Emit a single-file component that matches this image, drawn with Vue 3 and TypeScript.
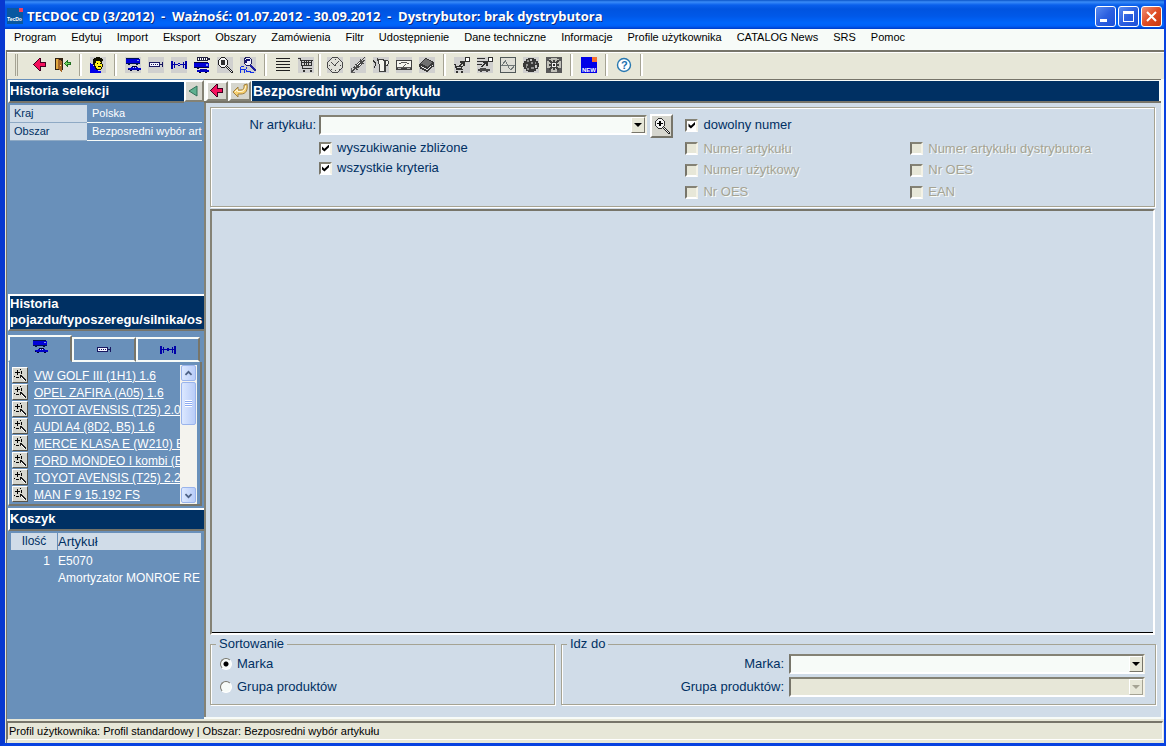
<script setup lang="ts">
import { ref } from 'vue'

interface Shape {
  d: string
  f?: string
  s?: string
  w?: number
}

const gray: Shape = { d: 'M0 0H16V16H0Z', f: '#d0d0cf' }
const truck: Shape[] = [
  { d: 'M1 1H14V2H15V6H1Z', f: '#0000d8' },
  { d: 'M1 1H14V2H1ZM1 6H15V7H1ZM3 7H5V8H3ZM11 7H13V8H11Z', f: '#001050' },
  { d: 'M12 3H14V4H12Z', f: '#8098e8' },
]
const car: Shape[] = [
  { d: 'M3 11H6V10H13V11H16V13H3Z', f: '#0000c8' },
  { d: 'M8 10H9V11H8ZM10 10H11V11H10Z', f: '#c8d4f0' },
  { d: 'M7 9H12V10H7ZM5 13H7V14H5ZM12 13H14V14H12ZM3 12H4V13H3Z', f: '#000030' },
]

const icons: Record<string, Shape[]> = {
  back: [
    { d: 'M1 7H2V6H3V5H4V4H5V3H6V2H7V1H9V5H14V10H9V14H7V13H6V12H5V11H4V10H3V9H2V8H1Z', f: '#400020' },
    { d: 'M2 7H3V6H4V5H5V4H6V3H7V2H8V6H13V9H8V13H7V12H6V11H5V10H4V9H3V8H2Z', f: '#f4105c' },
  ],
  door: [
    { d: 'M0 1H8V13H0Z', f: '#302010' },
    { d: 'M1 2H3V12H1Z', f: '#e0a840' },
    { d: 'M3 2H4V3H6V4H7V15H6V14H5V13H4V12H3Z', f: '#a86828' },
    { d: 'M5 8H6V9H5Z', f: '#fff080' },
    { d: 'M9 6H10V5H11V4H12V3H13V5H16V8H13V10H12V9H11V8H10V7H9Z', f: '#207020' },
    { d: 'M10 6H11V5H12V6H15V7H12V8H11V7H10Z', f: '#70d860' },
  ],
  head: [
    gray,
    { d: 'M0 6H1V7H3V9H5V12H8V14H11V16H0Z', f: '#0000e8' },
    { d: 'M4 3H11V4H12V7H13V10H12V12H11V13H6V12H5V10H4V8H3V4H4Z', f: '#181800' },
    { d: 'M5 4H10V5H11V7H12V10H11V12H7V11H6V9H5Z', f: '#fff020' },
    { d: 'M3 2H4V1H6V0H10V1H12V2H13V4H6V6H5V7H3Z', f: '#101000' },
    { d: 'M7 6H8V7H7ZM10 6H11V7H10ZM8 9H11V10H8Z', f: '#000' },
  ],
  vehicles: [gray, ...truck, ...car],
  engine: [
    gray,
    { d: 'M1 5H12V10H1Z', f: '#181860' },
    { d: 'M2 6H11V9H2Z', f: '#f4f4ff' },
    { d: 'M3 7H4V8H3ZM5 7H6V8H5ZM7 7H8V8H7ZM9 7H10V8H9ZM12 7H14V8H12ZM14 5H15V10H14Z', f: '#181860' },
  ],
  axle: [
    gray,
    { d: 'M0 4H2V12H0ZM3 5H4V11H3ZM12 5H13V11H12ZM14 4H16V12H14Z', f: '#0000a8' },
    { d: 'M2 7H14V8H2ZM7 6H9V9H7Z', f: '#0000a8' },
  ],
  truckengine: [
    { d: 'M3 0H14V4H3ZM14 1H16V3H14Z', f: '#202040' },
    { d: 'M4 1H5V3H4ZM6 1H7V3H6ZM8 1H9V3H8ZM10 1H11V3H10ZM12 1H13V3H12Z', f: '#fff' },
    { d: 'M0 5H14V6H15V10H0Z', f: '#0000d8' },
    { d: 'M0 10H15V11H0ZM0 5H14V6H0ZM3 11H5V12H3Z', f: '#000048' },
    { d: 'M12 7H14V9H12Z', f: '#8098e8' },
    { d: 'M3 13H6V12H13V13H15V15H3Z', f: '#0000c0' },
    { d: 'M5 15H7V16H5ZM11 15H13V16H11Z', f: '#000020' },
  ],
  zoom: [
    gray,
    { d: 'M4.5 .5H7.5L10.5 3.5V7.5L7.5 10.5H4.5L1.5 7.5V3.5Z', f: '#f4f4f4', s: '#202020', w: 1 },
    { d: 'M4 3H8V8H4Z', f: '#303030' },
    { d: 'M9 10H10V9H11V10H12V11H13V12H14V13H15V14H16V16H14V15H13V14H12V13H11V12H10V11H9Z', f: '#202020' },
    { d: 'M10 10H11V11H12V12H13V13H14V14H15V15H14V14H13V13H12V12H11V11H10Z', f: '#f0f0f0' },
  ],
  userzoom: [
    gray,
    { d: 'M5.5 .5H9.5L11.5 2.5V6.5L9.5 8.5H6.5L4.5 6.5V2.5Z', f: '#f0f0ff', s: '#202060', w: 1 },
    { d: 'M5 3H6V2H10V4H7V6H5Z', f: '#101070' },
    { d: 'M10 8H12V9H13V10H14V11H15V12H16V14H14V13H13V12H12V11H11V10H10Z', f: '#2020a0' },
    { d: 'M0 10H1V9H4V10H1V12H7V13H1V16H0ZM4 13H5V16H4ZM6 10H7V14H11V15H14V16H10V15H6Z', f: '#1030e8' },
  ],
  lines: [{ d: 'M1 1H15V2H1ZM1 4H15V5H1ZM1 7H15V8H1ZM1 10H15V11H1ZM1 13H15V14H1Z', f: '#202020' }],
  cart: [
    gray,
    { d: 'M0 1H3V3H15V4H14V9H5V11H14V12H4V9H3V4H2V2H0ZM4 4V5H13V4ZM4 6V8H13V6Z', f: '#303030' },
    { d: 'M6 4H7V9H6ZM8 4H9V9H8ZM10 4H11V9H10ZM5 13H7V15H5ZM12 13H14V15H12Z', f: '#303030' },
  ],
  clock: [
    gray,
    { d: 'M5.5 .5H10.5L15.5 5.5V10.5L10.5 15.5H5.5L.5 10.5V5.5Z', f: '#e0e0d8', s: '#484848', w: 1 },
    { d: 'M4 5H5V6H6V7H7V8H8V7H9V6H10V5H11V4H12V5H11V6H10V7H9V9H7V8H6V7H5V6H4ZM8 2H9V3H8ZM8 13H9V14H8ZM2 8H3V9H2ZM13 8H14V9H13ZM4 12H5V13H4ZM12 12H13V13H12Z', f: '#484848' },
  ],
  plug: [
    gray,
    { d: 'M14 0H15V1H14V2H13V3H12V4H13V3H15V4H14V5H13V6H14V7H12V8H11V9H10V10H9V11H7V12H8V13H6V12H5V13H4V14H3V15H1V14H2V13H3V12H4V11H3V10H4V9H5V10H6V8H5V7H7V6H8V5H9V4H10V2H11V3H12V2H13V1H14Z', f: '#484848' },
    { d: 'M9 5H10V6H9V7H8V8H7V7H8V6H9ZM10 7H11V8H10V9H9V8H10Z', f: '#fff' },
    { d: 'M1 11H2V14H1ZM1 15H5V16H1Z', f: '#606060' },
  ],
  jug: [
    gray,
    { d: 'M4 1H5V2H11V3H15V4H16V7H15V9H13V15H6V7H5V4H4Z', f: '#404040' },
    { d: 'M6 3H10V4H11V14H7V7H6ZM13 4H15V7H14V8H13Z', f: '#f4f4ee' },
    { d: 'M0 3H1V4H2V5H3V9H2V11H1V9H2V6H1V5H0Z', f: '#303030' },
  ],
  gauge: [
    gray,
    { d: 'M0 3H16V13H0Z', f: '#404040' },
    { d: 'M1 4H15V10H1Z', f: '#f4f4ee' },
    { d: 'M3 6H5V5H11V6H13V7H11V6H5V7H3ZM9 7H10V8H9V9H8V10H7V9H8V8H9ZM1 10H15V11H1Z', f: '#585858' },
    { d: 'M2 11H5V12H2ZM11 11H14V12H11Z', f: '#b0b0b0' },
  ],
  book: [
    gray,
    { d: 'M6 1H8V2H10V3H12V4H14V5H15V10H13V11H12V12H11V13H10V14H9V15H7V14H5V13H3V12H1V10H0V7H1V6H2V5H3V4H4V3H5V2H6Z', f: '#383838' },
    { d: 'M6 2H8V3H10V4H12V5H13V6H12V7H11V8H10V9H9V10H8V9H6V8H4V7H2V6H3V5H4V4H5V3H6Z', f: '#707070' },
    { d: 'M2 10H3V11H5V12H7V13H9V12H10V11H11V10H12V9H14V8H13V9H11V10H10V11H9V12H7V11H5V10H3V9H2Z', f: '#e8e8e8' },
  ],
  cartgo: [
    gray,
    { d: 'M11 0H16V5H11Z', f: '#303030' },
    { d: 'M12 1H15V4H12Z', f: '#fff' },
    { d: 'M6 4H11V9H9V7H8V8H7V9H5V8H6V7H7V6H6Z', f: '#303030' },
    { d: 'M0 7H2V9H9V10H8V12H9V13H2V11H1V8H0ZM3 10V11H7V10ZM2 14H4V16H2ZM7 14H9V16H7Z', f: '#303030' },
  ],
  listgo: [
    gray,
    { d: 'M0 1H8V2H0ZM0 4H6V5H0ZM0 7H5V8H0Z', f: '#303030' },
    { d: 'M11 0H16V5H11Z', f: '#303030' },
    { d: 'M12 1H15V4H12Z', f: '#fff' },
    { d: 'M6 4H11V9H9V7H8V8H7V9H6V10H4V9H5V8H6V7H7V6H6Z', f: '#303030' },
    { d: 'M1 12H3V11H9V12H13V14H11V15H9V14H5V15H3V14H1Z', f: '#484848' },
  ],
  wave: [
    { d: 'M.5 .5H15.5V15.5H.5Z', f: '#deded6', s: '#505858', w: 1 },
    { d: 'M1 8H15V9H1Z', f: '#707878' },
    { d: 'M2 7H3V5H4V4H5V3H6V5H7V7H8V9H9V11H10V12H11V11H12V10H13V9H14V11H13V12H12V13H10V12H9V11H8V9H7V7H6V5H5V6H4V7H3V8H2Z', f: '#707878' },
  ],
  globe: [
    gray,
    { d: 'M5 1H11V2H13V4H15V6H16V10H15V12H13V14H11V15H5V14H3V12H1V10H0V6H1V4H3V2H5Z', f: '#383838' },
    { d: 'M4 3H6V5H4ZM8 5H10V7H8ZM3 7H5V9H4V11H6V13H4V11H3ZM12 5H13V7H12ZM8 10H11V12H8Z', f: '#909090' },
    { d: 'M7 2H9V4H7ZM12 8H14V11H12Z', f: '#c8c8c8' },
  ],
  wheel: [
    { d: 'M0 0H16V16H0Z', f: '#585858' },
    { d: 'M5 1H11V2H13V4H15V11H13V13H11V15H5V13H3V11H1V4H3V2H5Z', f: '#c0c0b8' },
    { d: 'M3 3H5V4H6V5H7V3H9V5H10V4H11V3H13V5H12V6H11V7H13V9H11V10H12V11H13V13H11V12H10V11H9V13H7V11H6V12H5V13H3V11H4V10H5V9H3V7H5V6H4V5H3Z', f: '#404040' },
    { d: 'M6 6H10V10H6Z', f: '#f0f0f0' },
    { d: 'M7 7H9V9H7Z', f: '#303030' },
  ],
  undo: [
    { d: 'M1 9L6 4V7H9C11.5 7 12.5 5 12 2L15 1C16 7 14 11 9 11H6V14Z', f: '#f8d070', s: '#a08040', w: 1 },
    { d: 'M3 9L5.5 6.5V8.5H9C12 8.5 13.5 6 13.5 3', s: '#fff8d8', w: 1 },
  ],
  left: [{ d: 'M3 8L11 3V13Z', f: '#60b090', s: '#307058', w: 1 }],
  findplus: [
    { d: 'M4.5 .5H7.5L10.5 3.5V7.5L7.5 10.5H4.5L1.5 7.5V3.5Z', f: '#f4f4f4', s: '#303030', w: 1 },
    { d: 'M3 5H9V6H3ZM5 3H7V8H5Z', f: '#000' },
    { d: 'M9 10H10V9H11V10H12V11H13V12H14V13H15V14H16V16H14V15H13V14H12V13H11V12H10V11H9Z', f: '#202020' },
    { d: 'M10 10H11V11H12V12H13V13H14V14H15V15H14V14H13V13H12V12H11V11H10Z', f: '#f0f0f0' },
  ],
  rowzoom: [
    { d: 'M2 4H7V5H2ZM4 2H5V7H4ZM7 1H8V2H7ZM8 3H9V6H8ZM7 7H8V8H7ZM1 8H2V9H1ZM3 9H6V10H3Z', f: '#000' },
    { d: 'M7 8H8V7H9V8H10V9H11V10H12V11H13V13H12V12H11V11H10V10H9V9H8V10H7Z', f: '#202020' },
    { d: 'M8 9H9V10H10V11H11V12H12V13H11V12H10V11H9V10H8Z', f: '#fff' },
  ],
}

const menu = ['Program', 'Edytuj', 'Import', 'Eksport', 'Obszary', 'Zamówienia', 'Filtr', 'Udostępnienie',
  'Dane techniczne', 'Informacje', 'Profile użytkownika', 'CATALOG News', 'SRS', 'Pomoc']

const toolbar: string[][] = [
  ['back', 'door'],
  ['head'],
  ['vehicles', 'engine', 'axle', 'truckengine', 'zoom', 'userzoom'],
  ['lines', 'cart'],
  ['clock', 'plug', 'jug', 'gauge', 'book'],
  ['cartgo', 'listgo', 'wave', 'globe', 'wheel'],
  ['new'],
  ['help'],
]

const history = ['VW GOLF III (1H1) 1.6', 'OPEL ZAFIRA (A05) 1.6', 'TOYOT AVENSIS (T25) 2.0', 'AUDI A4 (8D2, B5) 1.6',
  'MERCE KLASA E (W210) E', 'FORD MONDEO I kombi (B', 'TOYOT AVENSIS (T25) 2.2', 'MAN F 9 15.192 FS']

const tabs = ['vehicles', 'engine', 'axle']
const activeTab = ref(0)

const numberKinds = ['Numer artykułu', 'Numer artykułu dystrybutora', 'Numer użytkowy', 'Nr OES', 'Nr OES', 'EAN']
const fuzzy = ref(true)
const allCriteria = ref(true)
const anyNumber = ref(true)
const sort = ref('marka')
</script>

<template>
  <div class="window">
    <header class="titlebar">
      <svg class="logo" viewBox="0 0 16 16" aria-hidden="true">
        <path d="M0 0H16V16H0Z" fill="#0a58a0" />
        <path d="M12 0H16V4H12Z" fill="#f04060" />
        <text x="0" y="13" font-size="5" font-weight="bold" fill="#fff">TecDo</text>
      </svg>
      <h1>TECDOC CD (3/2012)&nbsp; -&nbsp; Ważność: 01.07.2012 - 30.09.2012&nbsp; -&nbsp; Dystrybutor: brak dystrybutora</h1>
      <button class="cap" aria-label="Minimalizuj"><svg viewBox="0 0 19 19"><path d="M4 12H11V15H4Z" fill="#fff" /></svg></button>
      <button class="cap" aria-label="Maksymalizuj"><svg viewBox="0 0 19 19"><path d="M4 4H15V15H4ZM5 7V14H14V7Z" fill="#fff" fill-rule="evenodd" /></svg></button>
      <button class="cap close" aria-label="Zamknij"><svg viewBox="0 0 19 19"><path d="M5 5L14 14M14 5L5 14" stroke="#fff" stroke-width="2" /></svg></button>
    </header>

    <nav class="menu">
      <button v-for="m in menu" :key="m">{{ m }}</button>
    </nav>

    <div class="work">
      <div class="toolbar">
        <span class="grip"></span>
        <div v-for="(group, g) in toolbar" :key="g" class="group" :class="{ tight: g === 3 }">
          <button v-for="name in group" :key="name" :aria-label="name">
            <svg v-if="name === 'new'" viewBox="0 0 16 16">
              <path d="M0 0H16V16H0Z" fill="#0000e8" />
              <path d="M11 0H16V5H11Z" fill="#f87030" />
              <text x="1" y="15" font-size="6" font-weight="bold" fill="#fff">NEW</text>
            </svg>
            <svg v-else-if="name === 'help'" class="smooth" viewBox="0 0 16 16">
              <circle cx="8" cy="8" r="6.5" fill="#fff" stroke="#2878b0" stroke-width="1.4" />
              <text x="5" y="12" font-size="11" font-weight="bold" fill="#2070b0">?</text>
            </svg>
            <svg v-else viewBox="0 0 16 16">
              <path v-for="(p, i) in icons[name]" :key="i" :d="p.d" fill-rule="evenodd" :fill="p.f ?? 'none'" :stroke="p.s" :stroke-width="p.w" />
            </svg>
          </button>
        </div>
      </div>

      <div class="main">
        <aside class="side">
          <div class="side-top">
            <h2 class="bar">Historia selekcji</h2>
            <button class="sq" aria-label="Zwiń">
              <svg class="smooth" viewBox="0 0 16 16"><path v-for="(p, i) in icons.left" :key="i" :d="p.d" :fill="p.f ?? 'none'" :stroke="p.s" /></svg>
            </button>
          </div>
          <table class="sel">
            <tbody>
              <tr><th scope="row">Kraj</th><td>Polska</td></tr>
              <tr><th scope="row">Obszar</th><td>Bezposredni wybór art</td></tr>
            </tbody>
          </table>

          <h2 class="bar two">Historia<br>pojazdu/typoszeregu/silnika/os</h2>
          <div class="tabs" role="tablist">
            <button v-for="(t, i) in tabs" :key="t" role="tab" :class="{ on: activeTab === i }"
              :aria-selected="activeTab === i" :aria-label="t" @click="activeTab = i">
              <svg viewBox="0 0 16 16">
                <path v-for="(p, k) in icons[t].slice(1)" :key="k" :d="p.d" :fill="p.f ?? 'none'" :stroke="p.s" />
              </svg>
            </button>
          </div>
          <div class="pane">
            <ul class="list">
              <li v-for="h in history" :key="h">
                <button class="mini" aria-label="Szczegóły">
                  <svg viewBox="0 0 14 14">
                    <path v-for="(p, k) in icons.rowzoom" :key="k" :d="p.d" :fill="p.f ?? 'none'" />
                  </svg>
                </button>
                <a href="#">{{ h }}</a>
              </li>
            </ul>
            <div class="scroll">
              <button aria-label="W górę"><svg viewBox="0 0 15 15"><path d="M4 9L7.5 5.5L11 9" fill="none" stroke="#4d6185" stroke-width="2" /></svg></button>
              <div class="thumb"><i></i></div>
              <button class="down" aria-label="W dół"><svg viewBox="0 0 15 15"><path d="M4 6L7.5 9.5L11 6" fill="none" stroke="#4d6185" stroke-width="2" /></svg></button>
            </div>
          </div>

          <h2 class="bar basket">Koszyk</h2>
          <table class="cartlist">
            <thead><tr><th scope="col">Ilość</th><th scope="col">Artykuł</th></tr></thead>
            <tbody>
              <tr><td>1</td><td>E5070</td></tr>
              <tr><td></td><td>Amortyzator MONROE RE</td></tr>
            </tbody>
          </table>
        </aside>

        <main class="content">
          <div class="head">
            <button class="sq" aria-label="Wstecz">
              <svg viewBox="0 0 16 16"><path v-for="(p, i) in icons.back" :key="i" :d="p.d" :fill="p.f ?? 'none'" /></svg>
            </button>
            <button class="sq" aria-label="Cofnij">
              <svg class="smooth" viewBox="0 0 16 16"><path v-for="(p, i) in icons.undo" :key="i" :d="p.d" :fill="p.f ?? 'none'" :stroke="p.s" /></svg>
            </button>
            <h2 class="title">Bezposredni wybór artykułu</h2>
          </div>

          <form class="panels" @submit.prevent>
            <section class="criteria">
              <div class="search">
                <label for="nr">Nr artykułu:</label>
                <div class="combo">
                  <select id="nr"><option></option></select>
                  <span class="drop"></span>
                </div>
                <button class="find" aria-label="Szukaj">
                  <svg viewBox="0 0 16 16">
                    <path v-for="(p, k) in icons.findplus" :key="k" :d="p.d" :fill="p.f ?? 'none'" :stroke="p.s" :stroke-width="p.w" />
                  </svg>
                </button>
                <div class="opts">
                  <label class="check"><input v-model="fuzzy" type="checkbox">wyszukiwanie zbliżone</label>
                  <label class="check"><input v-model="allCriteria" type="checkbox">wszystkie kryteria</label>
                </div>
              </div>
              <div class="kinds">
                <label class="check any"><input v-model="anyNumber" type="checkbox">dowolny numer</label>
                <label v-for="(k, i) in numberKinds" :key="i" class="check off"><input type="checkbox" disabled>{{ k }}</label>
              </div>
            </section>

            <section class="results"></section>

            <div class="bottom">
              <fieldset>
                <legend>Sortowanie</legend>
                <label class="radio"><input v-model="sort" type="radio" name="sort" value="marka">Marka</label>
                <label class="radio"><input v-model="sort" type="radio" name="sort" value="grupa">Grupa produktów</label>
              </fieldset>
              <fieldset class="goto">
                <legend>Idz do</legend>
                <label for="marka">Marka:</label>
                <div class="combo">
                  <select id="marka"><option></option></select>
                  <span class="drop"></span>
                </div>
                <label for="grupa">Grupa produktów:</label>
                <div class="combo dis">
                  <select id="grupa" disabled><option></option></select>
                  <span class="drop"></span>
                </div>
              </fieldset>
            </div>
          </form>
        </main>
      </div>

      <footer class="status"><span>Profil użytkownika: Profil standardowy | Obszar: Bezposredni wybór artykułu</span></footer>
    </div>
  </div>
</template>

<style>
html, body { margin: 0; background: #0840d8; }
</style>

<style scoped>
* { box-sizing: border-box; }
.window {
  height: 100vh;
  display: flex;
  flex-direction: column;
  font: 13px/16px "Liberation Sans", Arial, sans-serif;
  color: #003063;
  background: #e7e7d8;
  border: solid #0842e0;
  border-width: 0 2px 3px 5px;
  border-left-color: #0838d0;
  overflow: hidden;
}
button { font: inherit; padding: 0; border: 0; background: none; color: inherit; }
h1, h2 { margin: 0; }
svg { display: block; width: 16px; height: 16px; shape-rendering: crispEdges; }
svg.smooth { shape-rendering: auto; }

.titlebar {
  flex: none;
  height: 29px;
  margin: 0 -2px 0 -5px;
  padding: 3px 4px 0 7px;
  display: flex;
  align-items: center;
  gap: 2px;
  background: linear-gradient(#0a54c8 0, #3a8cf8 2px, #0a60ec 5px, #0054e0 9px, #0058e8 16px, #0066fc 23px, #0060f8 26px, #003cc8 29px);
}
.logo { flex: none; margin-right: 2px; }
h1 {
  flex: 1;
  font: bold 13px/16px "Open Sans", "Noto Sans", sans-serif;
  color: #fff;
  text-shadow: 1px 1px #0a2a80;
  white-space: nowrap;
}
.cap {
  width: 21px;
  height: 21px;
  border: 1px solid #fff;
  border-radius: 3px;
  background: linear-gradient(135deg, #5a8cf0, #2c60e0 50%, #1c50d8);
}
.cap svg { width: 19px; height: 19px; }
.cap.close { background: linear-gradient(135deg, #f09078, #e04c24 50%, #c83810); }
.cap.close svg { shape-rendering: auto; }

.menu {
  flex: none;
  height: 21px;
  padding: 0 9px 5px;
  display: flex;
  gap: 15px;
  background: #f7fbf8;
  color: #000;
  font-size: 11px;
}
.menu button { white-space: nowrap; }

.work {
  flex: 1;
  min-height: 0;
  display: flex;
  flex-direction: column;
  margin-left: 1px;
  border: solid #77756a;
  border-width: 2px 0 0 1px;
}
.toolbar {
  flex: none;
  height: 27px;
  display: flex;
  align-items: center;
  padding: 0 0 2px 8px;
  border-top: 1px solid #fff;
}
.grip { width: 3px; height: 22px; border: solid #a5a393; border-width: 0 1px; margin-right: 11px; }
.group { display: flex; position: relative; margin-right: 12px; }
.group::after {
  content: "";
  position: absolute;
  right: -7px;
  top: -3px;
  width: 2px;
  height: 22px;
  border-left: 1px solid #a5a393;
  background: #fff;
}
.group.tight { margin-right: 6px; }
.group.tight::after { right: -3px; }
.group button { width: 23px; height: 16px; padding-left: 3px; }

.main { flex: 1; min-height: 0; display: flex; }
.side {
  flex: none;
  width: 197px;
  background: #6990ba;
  padding: 1px 0 0 1px;
  display: flex;
  flex-direction: column;
  color: #fff;
  overflow: hidden;
}
.side-top { display: flex; height: 23px; }
.bar {
  flex: 1;
  background: #003063;
  border: solid #fff;
  border-width: 2px 0 0 2px;
  border-bottom: 2px solid #77756a;
  font-size: 13px;
  line-height: 18px;
  white-space: nowrap;
}
.sq {
  flex: none;
  width: 22px;
  height: 22px;
  display: grid;
  place-items: center;
  background: #d6d6ce;
  border: 2px solid;
  border-color: #fff #848275 #848275 #fff;
}
.side-top .sq { width: 20px; }

table { border-spacing: 0; table-layout: fixed; }
.sel { width: 192px; margin: 2px 0 0 2px; font-size: 11px; line-height: 17px; }
.sel th { width: 77px; font-weight: normal; text-align: left; padding: 0 4px; background: #d0dce8; color: #003063; border-bottom: 1px solid #8ea9c4; }
.sel td { padding: 0 0 0 5px; border-bottom: 1px solid #f7fbf8; white-space: nowrap; }

.bar.two { flex: none; margin-top: auto; height: 37px; line-height: 16px; }
.tabs { flex: none; display: flex; height: 27px; margin-top: 4px; width: 192px; align-items: flex-end; }
.tabs button {
  flex: 1;
  height: 25px;
  display: grid;
  place-items: center;
  border: 2px solid #f7fbf8;
  border-right-color: #77756a;
}
.tabs button.on { height: 27px; border-bottom-color: transparent; padding-bottom: 3px; }
.pane {
  flex: none;
  width: 194px;
  height: 144px;
  display: flex;
  padding: 3px 3px 0;
  border: solid #f7fbf8;
  border-width: 0 2px 2px 1px;
  border-right-color: #77756a;
  border-bottom-color: #77756a;
}
.list { flex: 1; min-width: 0; margin: 0; padding: 2px 0 0; list-style: none; overflow: hidden; font-size: 12px; }
.list li { display: flex; height: 17px; gap: 6px; line-height: 19px; white-space: nowrap; }
.list a { color: #fff; }
.mini { flex: none; width: 16px; height: 16px; background: #d6d6ce; border: 1px solid; border-color: #fff #55534a #55534a #fff; }
.mini svg { width: 14px; height: 14px; }
.scroll { flex: none; width: 17px; display: flex; flex-direction: column; background: #f4f3ee; padding: 0 1px; }
.scroll button, .thumb { flex: none; border: 1px solid #9ab4ec; border-radius: 2px; background: linear-gradient(90deg, #dce8ff, #b8ccf8); }
.scroll button { height: 16px; display: grid; place-items: center; }
.scroll svg { width: 13px; height: 13px; shape-rendering: auto; }
.scroll .down { margin-top: auto; margin-bottom: 1px; }
.thumb { height: 43px; margin-top: 1px; display: grid; place-items: center; }
.thumb i { width: 7px; height: 7px; background: repeating-linear-gradient(#fff 0 1px, #8caaf0 1px 2px); }

.bar.basket { flex: none; margin-top: 2px; height: 23px; }
.cartlist { flex: none; width: 190px; margin: 2px 0 132px 3px; font-size: 12px; line-height: 17px; }
.cartlist th { font-weight: normal; background: #d0dce8; color: #003063; line-height: 17px; padding: 0; }
.cartlist th:first-child { width: 47px; border-right: 1px solid #6990ba; }
.cartlist th + th { text-align: left; font-size: 13px; }
.cartlist td { padding: 0; white-space: nowrap; }
.cartlist td:first-child { text-align: right; padding-right: 8px; }
.cartlist tbody tr:first-child td { padding-top: 3px; }

.content {
  flex: 1;
  min-width: 0;
  display: flex;
  flex-direction: column;
  background: #d0dce8;
  border: solid #f7fbf8;
  border-width: 0 3px 2px 0;
  box-shadow: inset 2px 0 #848275;
}
.head { flex: none; display: flex; height: 24px; padding: 1px 2px 0 2px; gap: 1px; border: solid #77756a; border-width: 1px 0 2px; background: #f7fbf8; }
.head .sq { height: 20px; }
.title { flex: 1; background: #003063; color: #fff; font-size: 14px; line-height: 20px; padding-left: 1px; }

.panels { flex: 1; min-height: 0; display: flex; flex-direction: column; padding: 4px 5px 12px 6px; }
.criteria {
  flex: none;
  display: grid;
  grid-template-columns: 475fr 469fr;
  height: 100px;
  margin-right: 1px;
  border: 1px solid #a5a393;
  box-shadow: inset 1px 1px #fff, 1px 1px #fff;
}
.search {
  display: grid;
  grid-template-columns: 105px 1fr 23px;
  grid-template-rows: 24px 1fr;
  column-gap: 3px;
  align-items: start;
  padding: 6px 12px 0 0;
}
.search > label { text-align: right; line-height: 22px; }
.combo { position: relative; height: 20px; margin-top: 1px; }
.combo select {
  appearance: none;
  display: block;
  width: 100%;
  height: 20px;
  border: 2px solid;
  border-color: #848275 #f4f2e6 #fff #77756a;
  border-radius: 0;
  background: #f7fbf8;
  font: inherit;
  color: #000;
}
.drop {
  position: absolute;
  right: 2px;
  top: 2px;
  width: 14px;
  height: 16px;
  pointer-events: none;
  background: #e7e7d8;
  border: 1px solid;
  border-color: #fff #77756a #77756a #fff;
}
.drop::after {
  content: "";
  position: absolute;
  left: 2px;
  top: 5px;
  border: solid transparent;
  border-width: 4px 4px 0;
  border-top-color: #000;
}
.combo.dis select { background: #e7e7d8; opacity: 1; }
.combo.dis .drop { border-color: #fff #a5a393 #a5a393 #fff; }
.combo.dis .drop::after { border-top-color: #a5a393; }
.find { width: 23px; height: 24px; display: grid; place-items: center; background: #d6d6ce; border: 2px solid; border-color: #fff #77756a #77756a #fff; }
.opts { grid-column: 2 / 4; display: grid; grid-auto-rows: 20px; }
.check, .radio { display: flex; align-items: center; gap: 5px; white-space: nowrap; }
.check input {
  appearance: none;
  flex: none;
  width: 13px;
  height: 13px;
  margin: 0;
  border: 2px solid;
  border-color: #848275 #f4f2e6 #fff #77756a;
  background: #fff;
}
.check input:checked { display: grid; place-items: center; }
.check input:checked::after {
  content: "";
  width: 7px;
  height: 7px;
  background: #000;
  clip-path: polygon(0 30%, 35% 60%, 100% 0, 100% 40%, 35% 100%, 0 70%);
}
.kinds { display: grid; grid-template-columns: 225fr 244fr; grid-template-rows: 24px 23px 20px 24px; padding-top: 5px; }
.any { grid-column: 1 / 3; }
.off { color: #a5a393; text-shadow: 1px 1px #f7fbf8; }
.off input { background: #e7e7d8; }

.results {
  flex: 1;
  margin: 2px 1px 0 0;
  border: 2px solid;
  border-color: #77756a #fff #fff #848275;
  box-shadow: inset 0 -1px #000;
}

.bottom { flex: none; display: grid; grid-template-columns: 345fr 595fr; gap: 6px; padding-top: 1px; }
fieldset { margin: 0; min-width: 0; height: 69px; padding: 0 9px; border: 1px solid #a5a393; box-shadow: 1px 1px #fff, inset 1px 0 #fff; }
legend { padding: 0 3px; margin-left: -4px; }
.radio { height: 23px; }
.radio input {
  appearance: none;
  flex: none;
  width: 12px;
  height: 12px;
  margin: 0;
  border: 1px solid;
  border-color: #77756a #fff #fff #77756a;
  border-radius: 50%;
  background: #f7fbf8;
}
.radio input:checked { background: radial-gradient(circle, #000 2px, #f7fbf8 3px); }
.goto { display: grid; grid-template-columns: 213px 1fr; column-gap: 5px; grid-auto-rows: 23px; padding-right: 10px; }
.goto label { text-align: right; line-height: 23px; }
.goto .combo { margin-top: 2px; }

.status {
  flex: none;
  height: 24px;
  padding: 2px 1px 3px 0;
  font-size: 11px;
  color: #000;
}
.status span { display: block; height: 19px; line-height: 16px; padding-left: 1px; border: 1px solid; border-color: #77756a #fff #fff #77756a; border-top-width: 2px; white-space: nowrap; }
</style>
